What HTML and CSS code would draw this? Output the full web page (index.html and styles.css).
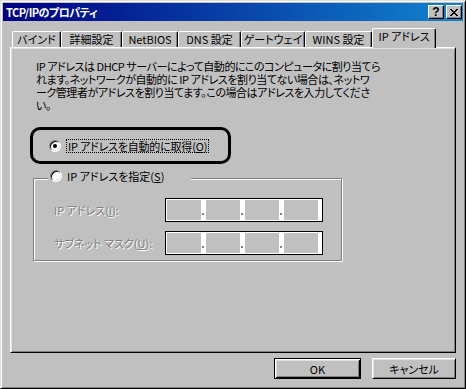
FILE: index.html
```html
<!DOCTYPE html>
<html lang="ja">
<head>
	<meta charset="UTF-8">
	<title>TCP/IPのプロパティ</title>
	<link rel="stylesheet" href="styles.css">
</head>
<body>
<div class="window">
	<div class="titlebar">
		<span class="title">TCP/IPのプロパティ</span>
		<span class="tbtn help">?</span>
		<span class="tbtn close">
			<svg width="8" height="7" viewBox="0 0 8 7" shape-rendering="crispEdges"><path d="M0 0h2v1H0zM6 0h2v1H6zM1 1h2v1H1zM5 1h2v1H5zM2 2h4v1H2zM3 3h2v1H3zM2 4h4v1H2zM1 5h2v1H1zM5 5h2v1H5zM0 6h2v1H0zM6 6h2v1H6z"/></svg>
		</span>
	</div>
	<div class="dialog">
		<div class="tabs">
			<div class="tab t1">バインド</div>
			<div class="tab t2">詳細設定</div>
			<div class="tab t3">NetBIOS</div>
			<div class="tab t4">DNS 設定</div>
			<div class="tab t5">ゲートウェイ</div>
			<div class="tab t6">WINS 設定</div>
			<div class="tab active">IP アドレス</div>
		</div>
		<div class="panel">
			<p class="desc">IP アドレスは DHCP サーバーによって自動的にこのコンピュータに割り当てら<br>れます。ネットワークが自動的に IP アドレスを割り当てない場合は、ネットワ<br>ーク管理者がアドレスを割り当てます。この場合はアドレスを入力してくださ<br>い。</p>
			<div class="mark">
				<span class="radio on"></span>
				<span class="focus">IP アドレスを自動的に取得(<u>O</u>)</span>
			</div>
			<div class="group">
				<div class="legend">
					<span class="radio"></span>
					<span class="legend-text">IP アドレスを指定(<u>S</u>)</span>
				</div>
				<div class="row">
					<span class="lbl">IP アドレス(<u>I</u>):</span>
					<div class="ipbox">
						<span class="seg"></span><span class="dot"></span><span class="seg"></span><span class="dot"></span><span class="seg"></span><span class="dot"></span><span class="seg"></span>
					</div>
				</div>
				<div class="row second">
					<span class="lbl">サブネット マスク(<u>U</u>):</span>
					<div class="ipbox">
						<span class="seg"></span><span class="dot"></span><span class="seg"></span><span class="dot"></span><span class="seg"></span><span class="dot"></span><span class="seg"></span>
					</div>
				</div>
			</div>
		</div>
		<div class="buttons">
			<button class="btn default">OK</button>
			<button class="btn cancel">キャンセル</button>
		</div>
	</div>
</div>
</body>
</html>
```

FILE: styles.css
```css
*{
	box-sizing: border-box;
}
body{
	margin: 0;
	background-color: #c0c0c0;
	font-family: "Noto Sans CJK JP", "Noto Sans", sans-serif;
	font-size: 11px;
	font-feature-settings: "palt";
	color: #000;
}
.window{
	width: 466px;
	height: 389px;
	border: 1px solid;
	border-color: #dfdfdf #000 #000 #dfdfdf;
	box-shadow: inset 1px 1px #fff, inset -1px -1px #808080;
	padding: 2px;
	background-color: #c0c0c0;
}

/* title bar */
.titlebar{
	height: 18px;
	display: flex;
	align-items: center;
	padding: 0 1px 0 3px;
	background: linear-gradient(to right, #000080, #1084d0);
}
.title{
	flex: 1;
	color: #fff;
	font-weight: bold;
	font-size: 11px;
	line-height: 18px;
	letter-spacing: -0.5px;
}
.tbtn{
	width: 16px;
	height: 14px;
	display: flex;
	align-items: center;
	justify-content: center;
	background-color: #c0c0c0;
	border: 1px solid;
	border-color: #fff #000 #000 #fff;
	box-shadow: inset -1px -1px #808080;
}
.help{
	margin-right: 2px;
	font-family: "Liberation Sans", sans-serif;
	font-weight: bold;
	font-size: 12px;
	line-height: 12px;
}

/* dialog body */
.dialog{
	padding: 7px 7px 0 7px;
}
.tabs{
	display: flex;
	height: 20px;
	margin-bottom: -1px;
	padding-left: 2px;
	position: relative;
	z-index: 1;
}
.tab{
	height: 16px;
	margin-top: 3px;
	border: 1px solid;
	border-bottom: none;
	border-color: #fff #000 #000 #fff;
	border-radius: 2px 2px 0 0;
	box-shadow: inset -1px 0 #808080;
	text-align: center;
	line-height: 15px;
	white-space: nowrap;
	background-color: #c0c0c0;
}
.t1{ width: 49px; }
.t2{ width: 61px; }
.t3{ width: 56px; }
.t4{ width: 63px; }
.t5{ width: 64px; }
.t6{ width: 67px; }
.active{
	width: 64px;
	height: 20px;
	margin-top: 0;
	line-height: 15px;
}

.panel{
	height: 306px;
	border: 1px solid;
	border-color: #fff #000 #000 #fff;
	box-shadow: inset 1px 1px #dfdfdf, inset -1px -1px #808080;
	padding-top: 1px;
}
.desc{
	margin: 11px 0 0 25px;
	line-height: 13px;
	white-space: nowrap;
	letter-spacing: -0.45px;
}

.radio{
	width: 12px;
	height: 12px;
	flex-shrink: 0;
	border-radius: 50%;
	background-color: #fff;
	border: 1px solid;
	border-color: #808080 #fff #fff #808080;
	box-shadow: inset 1px 1px #000, inset -1px -1px #dfdfdf;
	display: flex;
	align-items: center;
	justify-content: center;
}
.radio.on::after{
	content: "";
	width: 4px;
	height: 4px;
	border-radius: 50%;
	background-color: #000;
}

.mark{
	width: 201px;
	height: 37px;
	margin: 15px 0 0 19px;
	border: 3px solid #000;
	border-radius: 10px;
	display: flex;
	align-items: center;
	padding-left: 16px;
}
.focus{
	margin-left: 5px;
	padding: 0 1px;
	border: 1px dotted #000;
	line-height: 12px;
	white-space: nowrap;
	letter-spacing: -0.2px;
}

.group{
	width: 309px;
	height: 83px;
	margin: 14px 0 0 22px;
	border: 1px solid #808080;
	box-shadow: inset 1px 1px #fff, 1px 1px #fff;
}
.legend{
	width: 143px;
	height: 13px;
	margin: -10px 0 0 14px;
	padding-left: 2px;
	display: flex;
	align-items: center;
	background-color: #c0c0c0;
}
.legend-text{
	margin-left: 5px;
	white-space: nowrap;
}
.row{
	display: flex;
	align-items: center;
	margin-top: 16px;
	padding-left: 20px;
}
.row.second{
	margin-top: 9px;
}
.lbl{
	width: 111px;
	color: #808080;
	text-shadow: 1px 1px #fff;
	white-space: nowrap;
}
.ipbox{
	width: 158px;
	height: 24px;
	border: 1px solid #000;
	background-color: #fff;
	padding: 1px;
	display: flex;
}
.seg{
	width: 34px;
	height: 20px;
	background-color: #c0c0c0;
}
.dot{
	width: 5px;
	height: 20px;
	display: flex;
	align-items: flex-end;
	padding: 0 0 5px 1px;
}
.dot::after{
	content: "";
	width: 2px;
	height: 2px;
	background-color: #808080;
}

/* buttons */
.buttons{
	display: flex;
	justify-content: flex-end;
	gap: 11px;
	margin-top: 5px;
}
.btn{
	height: 21px;
	padding: 0;
	font-family: "Noto Sans CJK JP", "Noto Sans", sans-serif;
	font-size: 11px;
	font-feature-settings: "palt";
	color: #000;
	background-color: #c0c0c0;
}
.default{
	width: 87px;
	border: 1px solid #000;
	box-shadow: inset 1px 1px #fff, inset -1px -1px #000, inset 2px 2px #dfdfdf, inset -2px -2px #808080;
}
.cancel{
	width: 84px;
	border: 1px solid;
	border-color: #fff #000 #000 #fff;
	box-shadow: inset 1px 1px #dfdfdf, inset -1px -1px #808080;
}
```
